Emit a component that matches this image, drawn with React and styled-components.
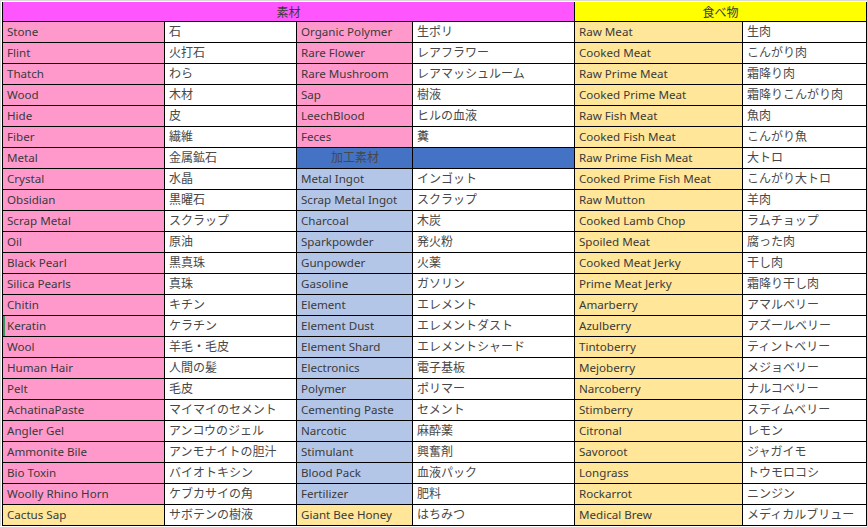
import React from "react";
import styled, { createGlobalStyle } from "styled-components";

const PINK = "#ff99cc";
const BLUE = "#b4c6e7";
const ORANGE = "#ffe699";

const GlobalStyle = createGlobalStyle`
  body {
    margin: 0;
    background: #ffffff;
    font-family: "Noto Sans", "Noto Sans CJK JP", sans-serif;
  }
`;

const materials = [
  ["Stone", "石", PINK],
  ["Flint", "火打石", PINK],
  ["Thatch", "わら", PINK],
  ["Wood", "木材", PINK],
  ["Hide", "皮", PINK],
  ["Fiber", "繊維", PINK],
  ["Metal", "金属鉱石", PINK],
  ["Crystal", "水晶", PINK],
  ["Obsidian", "黒曜石", PINK],
  ["Scrap Metal", "スクラップ", PINK],
  ["Oil", "原油", PINK],
  ["Black Pearl", "黒真珠", PINK],
  ["Silica Pearls", "真珠", PINK],
  ["Chitin", "キチン", PINK],
  ["Keratin", "ケラチン", PINK],
  ["Wool", "羊毛・毛皮", PINK],
  ["Human Hair", "人間の髪", PINK],
  ["Pelt", "毛皮", PINK],
  ["AchatinaPaste", "マイマイのセメント", PINK],
  ["Angler Gel", "アンコウのジェル", PINK],
  ["Ammonite Bile", "アンモナイトの胆汁", PINK],
  ["Bio Toxin", "バイオトキシン", PINK],
  ["Woolly Rhino Horn", "ケブカサイの角", PINK],
  ["Cactus Sap", "サボテンの樹液", ORANGE],
];

const second = [
  ["Organic Polymer", "生ポリ", PINK],
  ["Rare Flower", "レアフラワー", PINK],
  ["Rare Mushroom", "レアマッシュルーム", PINK],
  ["Sap", "樹液", PINK],
  ["LeechBlood", "ヒルの血液", PINK],
  ["Feces", "糞", PINK],
  ["加工素材", "", "header"],
  ["Metal Ingot", "インゴット", BLUE],
  ["Scrap Metal Ingot", "スクラップ", BLUE],
  ["Charcoal", "木炭", BLUE],
  ["Sparkpowder", "発火粉", BLUE],
  ["Gunpowder", "火薬", BLUE],
  ["Gasoline", "ガソリン", BLUE],
  ["Element", "エレメント", BLUE],
  ["Element Dust", "エレメントダスト", BLUE],
  ["Element Shard", "エレメントシャード", BLUE],
  ["Electronics", "電子基板", BLUE],
  ["Polymer", "ポリマー", BLUE],
  ["Cementing Paste", "セメント", BLUE],
  ["Narcotic", "麻酔薬", BLUE],
  ["Stimulant", "興奮剤", BLUE],
  ["Blood Pack", "血液パック", BLUE],
  ["Fertilizer", "肥料", BLUE],
  ["Giant Bee Honey", "はちみつ", ORANGE],
];

const food = [
  ["Raw Meat", "生肉"],
  ["Cooked Meat", "こんがり肉"],
  ["Raw Prime Meat", "霜降り肉"],
  ["Cooked Prime Meat", "霜降りこんがり肉"],
  ["Raw Fish Meat", "魚肉"],
  ["Cooked Fish Meat", "こんがり魚"],
  ["Raw Prime Fish Meat", "大トロ"],
  ["Cooked Prime Fish Meat", "こんがり大トロ"],
  ["Raw Mutton", "羊肉"],
  ["Cooked Lamb Chop", "ラムチョップ"],
  ["Spoiled Meat", "腐った肉"],
  ["Cooked Meat Jerky", "干し肉"],
  ["Prime Meat Jerky", "霜降り干し肉"],
  ["Amarberry", "アマルベリー"],
  ["Azulberry", "アズールベリー"],
  ["Tintoberry", "ティントベリー"],
  ["Mejoberry", "メジョベリー"],
  ["Narcoberry", "ナルコベリー"],
  ["Stimberry", "スティムベリー"],
  ["Citronal", "レモン"],
  ["Savoroot", "ジャガイモ"],
  ["Longrass", "トウモロコシ"],
  ["Rockarrot", "ニンジン"],
  ["Medical Brew", "メディカルブリュー"],
];

export default function App() {
  return (
    <>
      <GlobalStyle />
      <Sheet>
        <Grid>
          <Header $bg="#ff55ff" $span={4}>素材</Header>
          <Header $bg="#ffff00" $span={2}>食べ物</Header>
          {materials.map((m, i) => {
            const s = second[i];
            const f = food[i];
            const isSub = s[2] === "header";
            return (
              <React.Fragment key={i}>
                <Cell $bg={m[2]} $mark={m[0] === "Keratin"}>{m[0]}</Cell>
                <Cell $jp>{m[1]}</Cell>
                {isSub ? (
                  <>
                    <Cell $bg="#4472c4" $center $jp>{s[0]}</Cell>
                    <Cell $bg="#4472c4" />
                  </>
                ) : (
                  <>
                    <Cell $bg={s[2]}>{s[0]}</Cell>
                    <Cell $jp>{s[1]}</Cell>
                  </>
                )}
                <Cell $bg={ORANGE}>{f[0]}</Cell>
                <Cell $jp>{f[1]}</Cell>
              </React.Fragment>
            );
          })}
        </Grid>
      </Sheet>
    </>
  );
}

const Sheet = styled.div`
  padding: 2px 0 0 2px;
  background: linear-gradient(#d9d9d9, #d9d9d9) top left / 100% 1px no-repeat,
    linear-gradient(#d9d9d9, #d9d9d9) top left / 1px 100% no-repeat, #ffffff;
`;

const Grid = styled.div`
  display: grid;
  grid-template-columns: 162px 132px 116px 162px 168px 124px;
  grid-auto-rows: 21px;
  grid-template-rows: 20px;
  width: 864px;
  border-left: 1px solid #000;
  box-sizing: border-box;
`;

const Header = styled.div`
  grid-column: span ${(p) => p.$span};
  background: ${(p) => p.$bg};
  border-right: 1px solid #000;
  border-bottom: 1px solid #000;
  display: flex;
  align-items: center;
  justify-content: center;
  font-size: 12px;
  color: #3a3a3a;
`;

const Cell = styled.div`
  background: ${(p) => p.$bg || "#ffffff"};
  border-right: 1px solid #000;
  border-bottom: 1px solid #000;
  box-shadow: ${(p) => (p.$mark ? "inset 2px 0 0 #3f8f5f" : "none")};
  display: flex;
  align-items: center;
  justify-content: ${(p) => (p.$center ? "center" : "flex-start")};
  padding: 0 3px 0 4px;
  font-size: ${(p) => (p.$jp ? "12px" : "11.6px")};
  color: ${(p) => (p.$jp ? "#484848" : "#3a3a3a")};
  white-space: nowrap;
  overflow: hidden;
  line-height: 1;
`;
